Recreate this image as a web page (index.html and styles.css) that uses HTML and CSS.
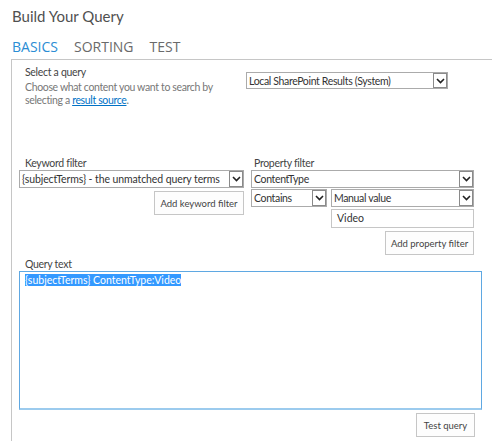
FILE: index.html
```html
<!DOCTYPE html>
<html>
<head>
<meta charset="utf-8">
<link rel="stylesheet" href="styles.css">
</head>
<body>
<div class="page">
  <h1 class="title">Build Your Query</h1>
  <div class="tabs">
    <span class="tab active">BASICS</span>
    <span class="tab">SORTING</span>
    <span class="tab">TEST</span>
  </div>
  <div class="panel">
    <div class="row-query">
      <div class="query-info">
        <div class="label">Select a query</div>
        <div class="desc">Choose what content you want to search by selecting a <a href="#" class="link">result source</a>.</div>
      </div>
      <div class="select sel-source">
        <span class="sel-text">Local SharePoint Results (System)</span>
        <span class="arrow"><svg width="9" height="6" viewBox="0 0 9 6"><path d="M1 1 L4.5 4.5 L8 1" fill="none" stroke="#222" stroke-width="1.6"/></svg></span>
      </div>
    </div>
    <div class="filters">
      <div class="col-left">
        <div class="label">Keyword filter</div>
        <div class="select sel-keyword">
          <span class="sel-text">{subjectTerms} - the unmatched query terms</span>
          <span class="arrow"><svg width="9" height="6" viewBox="0 0 9 6"><path d="M1 1 L4.5 4.5 L8 1" fill="none" stroke="#222" stroke-width="1.6"/></svg></span>
        </div>
        <div class="btn-row"><span class="btn btn-keyword">Add keyword filter</span></div>
      </div>
      <div class="col-right">
        <div class="label label-prop">Property filter</div>
        <div class="select sel-prop">
          <span class="sel-text">ContentType</span>
          <span class="arrow"><svg width="9" height="6" viewBox="0 0 9 6"><path d="M1 1 L4.5 4.5 L8 1" fill="none" stroke="#222" stroke-width="1.6"/></svg></span>
        </div>
        <div class="prop-row">
          <div class="select sel-op">
            <span class="sel-text">Contains</span>
            <span class="arrow"><svg width="9" height="6" viewBox="0 0 9 6"><path d="M1 1 L4.5 4.5 L8 1" fill="none" stroke="#222" stroke-width="1.6"/></svg></span>
          </div>
          <div class="select sel-val">
            <span class="sel-text">Manual value</span>
            <span class="arrow"><svg width="9" height="6" viewBox="0 0 9 6"><path d="M1 1 L4.5 4.5 L8 1" fill="none" stroke="#222" stroke-width="1.6"/></svg></span>
          </div>
        </div>
        <div class="input-row"><div class="input">Video</div></div>
        <div class="btn-row"><span class="btn btn-prop">Add property filter</span></div>
      </div>
    </div>
    <div class="label label-qt">Query text</div>
    <div class="textarea"><span class="selected">{subjectTerms} ContentType:Video</span></div>
    <div class="btn-row btn-row-test"><span class="btn btn-test">Test query</span></div>
  </div>
</div>
</body>
</html>
```
FILE: styles.css
```css
html, body {
  margin: 0;
  padding: 0;
  background: #ffffff;
}
body {
  font-family: "Lato", "Open Sans", sans-serif;
  color: #444444;
  width: 492px;
  height: 441px;
  overflow: hidden;
}
.page {
  padding-top: 5px;
}
.title {
  margin: 0 0 0 12px;
  font-family: "Lato", sans-serif;
  font-size: 15px;
  font-weight: 400;
  line-height: 22px;
  color: #505050;
}
.tabs {
  display: flex;
  gap: 16px;
  margin: 9px 0 0 12px;
  height: 22px;
  line-height: 22px;
  font-family: "Open Sans", sans-serif;
}
.tab {
  font-size: 14px;
  color: #6a6a6a;
}
.tab.active {
  color: #2a8dd4;
}
.panel {
  margin: 1px 0 0 11px;
  border-top: 1px solid #c6c6c6;
  border-left: 1px solid #c6c6c6;
  padding: 0 0 0 7px;
  height: 381px;
  overflow: hidden;
}
.row-query {
  display: flex;
  height: 97px;
}
.query-info {
  width: 214px;
  padding: 6px 0 0 6px;
}
.label {
  font-size: 10.5px;
  letter-spacing: -0.3px;
  line-height: 13px;
  color: #444444;
}
.desc {
  font-size: 10.5px;
  letter-spacing: -0.35px;
  line-height: 13px;
  color: #777777;
  margin-top: 2px;
}
.link {
  color: #0072c6;
  text-decoration: underline;
}
.select {
  display: flex;
  align-items: stretch;
  box-sizing: border-box;
  border: 1px solid #ababab;
  height: 18px;
  background: #fff;
}
.sel-text {
  flex: 1;
  font-size: 10.5px;
  letter-spacing: -0.35px;
  line-height: 16px;
  padding-left: 2px;
  white-space: nowrap;
  overflow: hidden;
  color: #333;
}
.arrow {
  width: 14px;
  box-sizing: border-box;
  border: 1px solid #8a8a8a;
  display: flex;
  align-items: center;
  justify-content: center;
  background: #fff;
}
.sel-source {
  width: 202px;
  margin-top: 12px;
  margin-left: 7px;
  height: 17px;
}
.filters {
  display: grid;
  grid-template-columns: 225px 223px;
  column-gap: 7px;
}
.col-left .label {
  padding-left: 6px;
}
.label-prop {
  padding-left: 3px;
}
.sel-keyword {
  width: 225px;
}
.sel-keyword .sel-text {
  letter-spacing: -0.1px;
}
.btn-row {
  display: flex;
  justify-content: flex-end;
  margin-top: 3px;
}
.btn {
  display: inline-flex;
  align-items: center;
  justify-content: center;
  box-sizing: border-box;
  height: 24px;
  border: 1px solid #c6c6c6;
  background: #fdfdfd;
  font-size: 9.5px;
  color: #444;
}
.btn-keyword { width: 90px; }
.btn-prop { width: 89px; }
.btn-test { width: 59px; }
.sel-prop { width: 223px; }
.prop-row {
  display: flex;
  gap: 4px;
  margin-top: 1px;
}
.sel-op { width: 76px; }
.sel-val { width: 143px; }
.input-row {
  display: flex;
  justify-content: flex-end;
  margin-top: 2px;
}
.input {
  box-sizing: border-box;
  width: 143px;
  height: 19px;
  border: 1px solid #c6c6c6;
  font-size: 10.5px;
  line-height: 17px;
  padding-left: 5px;
  color: #333;
}
.label-qt {
  padding-left: 6px;
  margin-top: 3px;
}
.textarea {
  box-sizing: border-box;
  width: 463px;
  height: 139px;
  border: 1px solid #5fa8e2;
  border-bottom: 2px solid #9ccbee;
  padding: 2px 5px;
  font-size: 10.5px;
  line-height: 13px;
}
.selected {
  background: #3399ff;
  color: #ffffff;
}
.btn-row-test {
  width: 456px;
}
```
